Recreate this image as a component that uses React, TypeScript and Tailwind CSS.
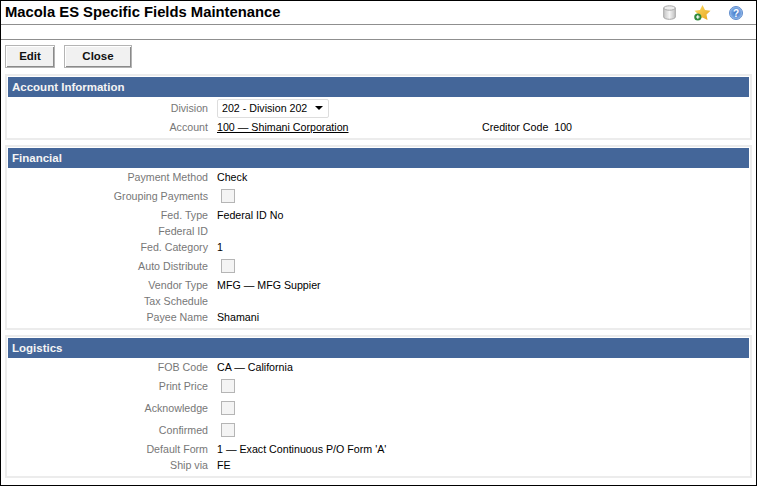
import { ReactNode } from "react";

function Row({ label, h, children }: { label: string; h: string; children?: ReactNode }) {
  return (
    <div className={`flex items-center ${h}`}>
      <div className="w-[200px] text-right text-[#777]">{label}</div>
      <div className="ml-[9px] flex items-center text-black">{children}</div>
    </div>
  );
}

function Check() {
  return <div className="ml-[4px] h-[14px] w-[14px] border border-[#b5b5b5] bg-[#f4f4f4]" />;
}

function Panel({ title, className, children }: { title: string; className: string; children: ReactNode }) {
  return (
    <section className={`mx-[4px] shrink-0 border-2 border-[#ececec] px-[1px] pt-[1px] ${className}`}>
      <h2 className="flex h-[20px] items-center bg-[#446699] pl-[4px] pt-[1px] text-[11.5px] font-bold text-[#f4f4f4]">{title}</h2>
      {children}
    </section>
  );
}

export default function App() {
  return (
    <div className="flex h-[486px] w-[757px] flex-col border border-black bg-white font-['Liberation_Sans',Arial,sans-serif] text-[10.67px] leading-none">
      <header className="flex h-[24px] shrink-0 items-center justify-between border-b border-[#8f8f8f]">
        <h1 className="pl-[4px] text-[14.8px] font-bold text-black">Macola ES Specific Fields Maintenance</h1>
        <div className="flex items-center gap-[18px] pr-[13px]">
          <svg width="13" height="15" viewBox="0 0 13 15">
            <defs>
              <linearGradient id="db" x1="0" x2="1" y1="0" y2="0">
                <stop offset="0" stopColor="#c4c4c4" />
                <stop offset=".5" stopColor="#f4f4f4" />
                <stop offset="1" stopColor="#c0c0c0" />
              </linearGradient>
            </defs>
            <path d="M.7 3v9c0 1.300 2.500 2.300 5.800 2.300s5.800-1 5.800-2.300V3z" fill="url(#db)" stroke="#a8a8a8" />
            <ellipse cx="6.500" cy="3" rx="5.800" ry="2.200" fill="#ececec" stroke="#a8a8a8" />
          </svg>
          <svg width="17" height="16" viewBox="0 0 17 16">
            <defs>
              <linearGradient id="star" x1="0" x2="1" y1="0" y2="1">
                <stop offset="0" stopColor="#fbdc62" />
                <stop offset="1" stopColor="#e8a51e" />
              </linearGradient>
            </defs>
            <path d="M8.500 0l2.500 5 5.500.7-4 3.800 1 5.500-5-2.600-5 2.600 1-5.500-4-3.800L6 5z" fill="url(#star)" />
            <circle cx="3.800" cy="12" r="3.600" fill="#2f8a3c" />
            <path d="M3.800 10.200v3.600M2 12h3.600" stroke="#fff" strokeWidth="1.200" />
          </svg>
          <svg width="14" height="14" viewBox="0 0 14 14">
            <defs>
              <radialGradient id="help">
                <stop offset="0" stopColor="#3f74c4" />
                <stop offset=".7" stopColor="#6f9fdf" />
                <stop offset="1" stopColor="#a9c6ec" />
              </radialGradient>
            </defs>
            <circle cx="7" cy="7" r="6.500" fill="url(#help)" stroke="#5f8ccc" />
            <text x="7" y="10.500" textAnchor="middle" fontSize="10" fontWeight="700" fill="#fff" fontFamily="Liberation Sans">?</text>
          </svg>
        </div>
      </header>
      <div className="h-[15px] shrink-0 border-b border-[#8f8f8f]" />
      <div className="flex h-[34px] shrink-0 items-start gap-[9px] pl-[4px] pt-[5px]">
        <button type="button" className="h-[23px] w-[50px] border border-[#b4b4b4] bg-[#f1f1f1] text-[11.5px] font-bold text-[#111] shadow-[inset_1px_1px_0_#fff,inset_-1px_-1px_0_#8a8a8a]">Edit</button>
        <button type="button" className="h-[23px] w-[68px] border border-[#b4b4b4] bg-[#f1f1f1] text-[11.5px] font-bold text-[#111] shadow-[inset_1px_1px_0_#fff,inset_-1px_-1px_0_#8a8a8a]">Close</button>
      </div>
      <Panel title="Account Information" className="h-[66px]">
        <Row label="Division" h="h-[22px]">
          <div className="flex h-[19px] w-[112px] items-center justify-between rounded-[2px] border border-[#ddd] pl-[4px] pr-[5px] whitespace-nowrap">
            202 - Division 202
            <span className="h-0 w-0 border-x-[4px] border-t-[4px] border-x-transparent border-t-black" />
          </div>
        </Row>
        <div className="flex h-[16px] items-center">
          <div className="w-[200px] text-right text-[#777]">Account</div>
          <div className="ml-[9px] w-[265px] text-black underline">100 — Shimani Corporation</div>
          <div className="text-black">Creditor Code&nbsp;&nbsp;100</div>
        </div>
      </Panel>
      <Panel title="Financial" className="mt-[5px] h-[185px]">
        <Row label="Payment Method" h="h-[18px]">Check</Row>
        <Row label="Grouping Payments" h="h-[20px]"><Check /></Row>
        <Row label="Fed. Type" h="h-[18px]">Federal ID No</Row>
        <Row label="Federal ID" h="h-[15px]" />
        <Row label="Fed. Category" h="h-[16px]">1</Row>
        <Row label="Auto Distribute" h="h-[22px]"><Check /></Row>
        <Row label="Vendor Type" h="h-[16px]">MFG — MFG Suppier</Row>
        <Row label="Tax Schedule" h="h-[16px]" />
        <Row label="Payee Name" h="h-[17px]">Shamani</Row>
      </Panel>
      <Panel title="Logistics" className="mt-[5px] h-[143px]">
        <Row label="FOB Code" h="h-[17px] pt-[1px]">CA — California</Row>
        <Row label="Print Price" h="h-[22px]"><Check /></Row>
        <Row label="Acknowledge" h="h-[22px]"><Check /></Row>
        <Row label="Confirmed" h="h-[22px]"><Check /></Row>
        <Row label="Default Form" h="h-[16px]">1 — Exact Continuous P/O Form 'A'</Row>
        <Row label="Ship via" h="h-[16px]">FE</Row>
      </Panel>
    </div>
  );
}
